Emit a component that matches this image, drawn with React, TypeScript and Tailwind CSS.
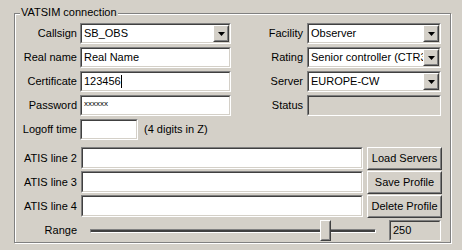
import React from "react";

function Sunken({ className = "", bg = "bg-white", children }: { className?: string; bg?: string; children?: React.ReactNode }) {
  return (
    <div className={`border border-t-[#808080] border-l-[#808080] border-r-white border-b-white ${className}`}>
      <div className={`h-full w-full border border-t-[#404040] border-l-[#404040] border-r-[#d4d0c8] border-b-[#d4d0c8] ${bg} flex items-center overflow-hidden`}>
        {children}
      </div>
    </div>
  );
}

function Raised({ className = "", children }: { className?: string; children?: React.ReactNode }) {
  return (
    <div className={`border border-t-white border-l-white border-r-[#404040] border-b-[#404040] bg-[#d4d0c8] ${className}`}>
      <div className="h-full w-full border border-t-[#d4d0c8] border-l-[#d4d0c8] border-r-[#808080] border-b-[#808080] flex items-center justify-center">
        {children}
      </div>
    </div>
  );
}

function Combo({ value, className = "" }: { value: string; className?: string }) {
  return (
    <Sunken className={className}>
      <span className="flex-1 pl-[2px] whitespace-nowrap overflow-hidden">{value}</span>
      <Raised className="w-[16px] h-full shrink-0">
        <svg width="7" height="4" viewBox="0 0 7 4">
          <path d="M0 0h7L3.5 4z" fill="#000" />
        </svg>
      </Raised>
    </Sunken>
  );
}

function Label({ text, w = "w-[62px]" }: { text: string; w?: string }) {
  return <span className={`${w} text-right shrink-0 whitespace-nowrap`}>{text}</span>;
}

export default function App() {
  return (
    <div className="w-[462px] h-[250px] bg-[#d4d0c8] pt-[13px] pl-[14px] font-[Tahoma,'Liberation_Sans',Arial,sans-serif] text-[11px] leading-[13px] text-black">
      <div className="relative w-[437px] h-[230px] border border-[#808080] shadow-[1px_1px_0_#fff,inset_1px_1px_0_#fff]">
        <span className="absolute left-[5px] -top-[8px] bg-[#d4d0c8] px-px">VATSIM connection</span>

        <div className="pt-[9px] flex flex-col">
          <div className="flex">
            {/* left column */}
            <div className="flex flex-col gap-[3px] w-[216px]">
              <div className="flex items-center h-[21px]">
                <Label text="Callsign" />
                <Combo value="SB_OBS" className="ml-[3px] w-[151px] h-[21px]" />
              </div>
              <div className="flex items-center h-[21px]">
                <Label text="Real name" />
                <Sunken className="ml-[3px] w-[151px] h-[21px]">
                  <span className="pl-[2px]">Real Name</span>
                </Sunken>
              </div>
              <div className="flex items-center h-[21px]">
                <Label text="Certificate" />
                <Sunken className="ml-[3px] w-[151px] h-[21px]">
                  <span className="pl-[2px]">123456</span>
                  <span className="w-px h-[13px] bg-black" />
                </Sunken>
              </div>
              <div className="flex items-center h-[21px]">
                <Label text="Password" />
                <Sunken className="ml-[3px] w-[151px] h-[21px]">
                  <span className="pl-[2px] text-[8px] leading-[8px] self-start pt-[3px]">xxxxxx</span>
                </Sunken>
              </div>
              <div className="flex items-center h-[21px]">
                <Label text="Logoff time" />
                <Sunken className="ml-[3px] w-[58px] h-[21px]" />
                <span className="ml-[6px] whitespace-nowrap">(4 digits in Z)</span>
              </div>
            </div>

            {/* right column */}
            <div className="flex flex-col gap-[3px]">
              <div className="flex items-center h-[21px]">
                <Label text="Facility" w="w-[72px]" />
                <Combo value="Observer" className="ml-[4px] w-[134px] h-[21px]" />
              </div>
              <div className="flex items-center h-[21px]">
                <Label text="Rating" w="w-[72px]" />
                <Combo value="Senior controller (CTR3)" className="ml-[4px] w-[134px] h-[21px]" />
              </div>
              <div className="flex items-center h-[21px]">
                <Label text="Server" w="w-[72px]" />
                <Combo value="EUROPE-CW" className="ml-[4px] w-[134px] h-[21px]" />
              </div>
              <div className="flex items-center h-[21px]">
                <Label text="Status" w="w-[72px]" />
                <Sunken className="ml-[4px] w-[134px] h-[21px]" bg="bg-[#d4d0c8]" />
              </div>
            </div>
          </div>

          {/* ATIS lines + buttons */}
          <div className="mt-[7px] flex flex-col gap-[2px]">
            {[
              ["ATIS line 2", "Load Servers"],
              ["ATIS line 3", "Save Profile"],
              ["ATIS line 4", "Delete Profile"],
            ].map(([label, btn]) => (
              <div key={label} className="flex items-center h-[22px]">
                <Label text={label} />
                <Sunken className="ml-[4px] w-[282px] h-[22px]" />
                <Raised className="ml-[4px] w-[75px] h-[23px]">
                  <span className="whitespace-nowrap">{btn}</span>
                </Raised>
              </div>
            ))}
          </div>

          {/* Range */}
          <div className="mt-[3px] flex items-center h-[21px]">
            <Label text="Range" />
            <div className="relative ml-[13px] w-[286px] h-[21px]">
              <div className="absolute left-0 right-0 top-[9px] h-[4px] border-t border-l border-t-[#808080] border-l-[#808080] border-b border-r border-b-white border-r-white bg-[#404040]" />
              <Raised className="absolute left-[230px] top-0 w-[11px] h-[21px]" />
            </div>
            <Sunken className="ml-[13px] w-[52px] h-[21px]" bg="bg-[#d4d0c8]">
              <span className="pl-[2px]">250</span>
            </Sunken>
          </div>
        </div>
      </div>
    </div>
  );
}
